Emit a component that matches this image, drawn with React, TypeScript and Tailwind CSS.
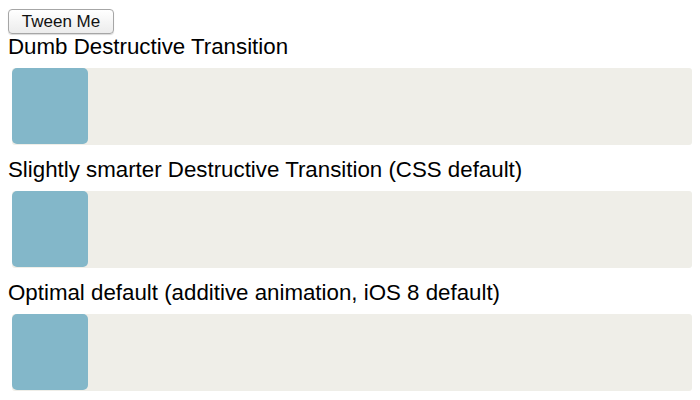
const rows = [
  'Dumb Destructive Transition',
  'Slightly smarter Destructive Transition (CSS default)',
  'Optimal default (additive animation, iOS 8 default)',
];

export default function App() {
  return (
    <div className="h-[400px] w-[700px] overflow-hidden bg-white pl-2 pt-[9px] text-black" style={{ fontFamily: '"Liberation Sans", Arial, sans-serif' }}>
      <button className="h-[25px] w-[106px] rounded-[4px] border border-[#a6a6a6] bg-gradient-to-b from-white to-[#ececec] text-[17px] leading-none text-[#111] shadow-[0_1px_1px_rgba(0,0,0,0.15)]">
        Tween Me
      </button>
      {rows.map((label, i) => (
        <div key={i} className={i === 0 ? '' : 'mt-[12px]'}>
          <div className="text-[22.3px] leading-[25px]">{label}</div>
          <div className="ml-1 mt-[9px] h-[77px] w-[680px] rounded-[3px] bg-[#efeee8]">
            <div className="h-[76px] w-[76px] rounded-[5px] bg-[#83b7c9]" />
          </div>
        </div>
      ))}
    </div>
  );
}
